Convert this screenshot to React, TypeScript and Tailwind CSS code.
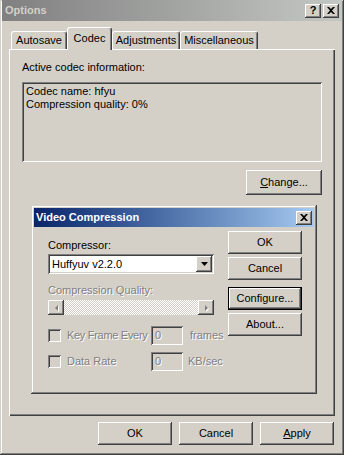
import React from "react";

const raised =
  "shadow-[inset_-1px_-1px_#404040,inset_1px_1px_#ffffff,inset_-2px_-2px_#808080,inset_2px_2px_#d4d0c8]";
const sunken =
  "shadow-[inset_1px_1px_#808080,inset_-1px_-1px_#ffffff,inset_2px_2px_#404040,inset_-2px_-2px_#d4d0c8]";
const dim = "text-[#808080] [text-shadow:1px_1px_0_#ffffff]";

const Button = ({ children, className = "", focused = false }: any) => (
  <div
    className={`flex items-center justify-center bg-[#d4d0c8] text-black ${raised} ${
      focused ? "border border-black" : ""
    } ${className}`}
  >
    {children}
  </div>
);

const Tab = ({ label, active, className = "" }: any) => (
  <div
    className={`relative flex justify-center rounded-t-[3px] border-l border-t border-r border-white border-r-[#404040] bg-[#d4d0c8] shadow-[inset_-1px_0_#808080] ${
      active ? "z-10 h-[23px] -mb-[1px] pt-[4px]" : "h-[18px] pt-[2px]"
    } ${className}`}
  >
    {label}
  </div>
);

const CaptionBtn = ({ children }: any) => (
  <div className={`flex h-[14px] w-[16px] items-center justify-center bg-[#d4d0c8] ${raised}`}>
    {children}
  </div>
);

const CloseGlyph = () => (
  <svg width="8" height="7" viewBox="0 0 8 7" className="mr-[1px]">
    <path d="M0 0h2l2 2 2-2h2L5 3.5 8 7H6L4 5 2 7H0l3-3.5z" fill="#000" />
  </svg>
);

const ArrowBtn = ({ dir }: { dir: "l" | "r" }) => (
  <div className={`flex h-[15px] w-[16px] items-center justify-center bg-[#d4d0c8] ${raised}`}>
    <svg width="5" height="8" viewBox="0 0 5 8">
      {dir === "l" ? (
        <>
          <path d="M4 1v6L1 4z" fill="#ffffff" transform="translate(1 1)" />
          <path d="M4 1v6L1 4z" fill="#808080" />
        </>
      ) : (
        <>
          <path d="M1 1v6l3-3z" fill="#ffffff" transform="translate(1 1)" />
          <path d="M1 1v6l3-3z" fill="#808080" />
        </>
      )}
    </svg>
  </div>
);

const Check = () => <div className={`h-[13px] w-[13px] shrink-0 bg-[#d4d0c8] ${sunken}`} />;

const SmallField = () => (
  <div className={`flex h-[19px] w-[32px] shrink-0 items-center bg-[#d4d0c8] pl-[4px] ${sunken}`}>
    <span className={dim}>0</span>
  </div>
);

export default function App() {
  return (
    <div className="h-[455px] w-[344px] overflow-hidden bg-[#d4d0c8] font-['Liberation_Sans',Arial,sans-serif] text-[11px] leading-[13px] text-black shadow-[inset_-1px_-1px_#404040,inset_1px_1px_#d4d0c8,inset_-2px_-2px_#808080,inset_2px_2px_#ffffff]">
      {/* title bar */}
      <div className="mx-[2px] flex h-[21px] items-center justify-between bg-linear-to-r from-[#808080] to-[#c4c8c4] pl-[3px] pr-[3px]">
        <span className="font-bold text-[#d4d0c8]">Options</span>
        <div className="flex gap-[2px]">
          <CaptionBtn>
            <span className="text-[11px] font-bold leading-none">?</span>
          </CaptionBtn>
          <CaptionBtn>
            <CloseGlyph />
          </CaptionBtn>
        </div>
      </div>

      {/* tabs */}
      <div className="ml-[11px] mt-[7px] flex h-[21px] items-end whitespace-nowrap">
        <Tab label="Autosave" className="w-[56px]" />
        <Tab label="Codec" active className="w-[45px]" />
        <Tab label="Adjustments" className="w-[68px]" />
        <Tab label="Miscellaneous" className="w-[78px]" />
      </div>

      {/* tab panel */}
      <div className="ml-[9px] h-[367px] w-[326px] border-l border-t border-white shadow-[inset_-1px_-1px_#404040,inset_-2px_-2px_#808080]">
        <p className="ml-[12px] mt-[11px]">Active codec information:</p>
        <div className={`ml-[12px] mt-[8px] h-[80px] w-[300px] px-[4px] pt-[3px] ${sunken}`}>
          <p>Codec name: hfyu</p>
          <p>Compression quality: 0%</p>
        </div>
        <Button className="ml-[236px] mt-[8px] h-[25px] w-[76px]">
          <span>
            <span className="underline">C</span>hange...
          </span>
        </Button>

        {/* video compression dialog */}
        <div className="ml-[21px] mt-[10px] h-[189px] w-[286px] bg-[#d4d0c8] p-[3px] shadow-[inset_-1px_-1px_#404040,inset_1px_1px_#d4d0c8,inset_-2px_-2px_#808080,inset_2px_2px_#ffffff]">
          <div className="flex h-[19px] items-center justify-between bg-linear-to-r from-[#0a246a] to-[#a6caf0] pl-[2px] pr-[2px]">
            <span className="font-bold text-white">Video Compression</span>
            <CaptionBtn>
              <CloseGlyph />
            </CaptionBtn>
          </div>
          <div className="flex gap-[14px] whitespace-nowrap pl-[14px]">
            <div className="w-[166px] shrink-0">
              <p className="mt-[12px]">Compressor:</p>
              <div className={`mt-[2px] flex h-[20px] items-center justify-between bg-white pl-[4px] pr-[2px] ${sunken}`}>
                <span>Huffyuv v2.2.0</span>
                <div className={`flex h-[16px] w-[16px] items-center justify-center bg-[#d4d0c8] ${raised}`}>
                  <svg width="7" height="4" viewBox="0 0 7 4">
                    <path d="M0 0h7L3.5 4z" fill="#000" />
                  </svg>
                </div>
              </div>
              <p className={`mt-[10px] ${dim}`}>Compression Quality:</p>
              <div className="mt-[3px] flex h-[15px] bg-[repeating-conic-gradient(#d4d0c8_0_25%,#ffffff_0_50%)] bg-[length:2px_2px]">
                <ArrowBtn dir="l" />
                <div className="flex-1" />
                <ArrowBtn dir="r" />
              </div>
              <div className="mt-[11px] flex h-[19px] items-center">
                <Check />
                <span className={`ml-[6px] w-[84px] shrink-0 tracking-[-0.3px] ${dim}`}>Key Frame Every</span>
                <SmallField />
                <span className={`ml-[7px] ${dim}`}>frames</span>
              </div>
              <div className="mt-[7px] flex h-[19px] items-center">
                <Check />
                <span className={`ml-[6px] w-[84px] shrink-0 ${dim}`}>Data Rate</span>
                <SmallField />
                <span className={`ml-[5px] ${dim}`}>KB/sec</span>
              </div>
            </div>
            <div className="w-[74px] shrink-0">
              <Button className="mt-[4px] h-[23px]">OK</Button>
              <Button className="mt-[3px] h-[23px]">Cancel</Button>
              <Button focused className="mt-[7px] h-[23px]">
                Configure...
              </Button>
              <Button className="mt-[3px] h-[23px]">About...</Button>
            </div>
          </div>
        </div>
      </div>

      {/* bottom buttons */}
      <div className="mt-[6px] flex justify-end gap-[7px] pr-[10px]">
        <Button className="h-[23px] w-[74px]">OK</Button>
        <Button className="h-[23px] w-[74px]">Cancel</Button>
        <Button className="h-[23px] w-[74px]">
          <span>
            <span className="underline">A</span>pply
          </span>
        </Button>
      </div>
    </div>
  );
}
